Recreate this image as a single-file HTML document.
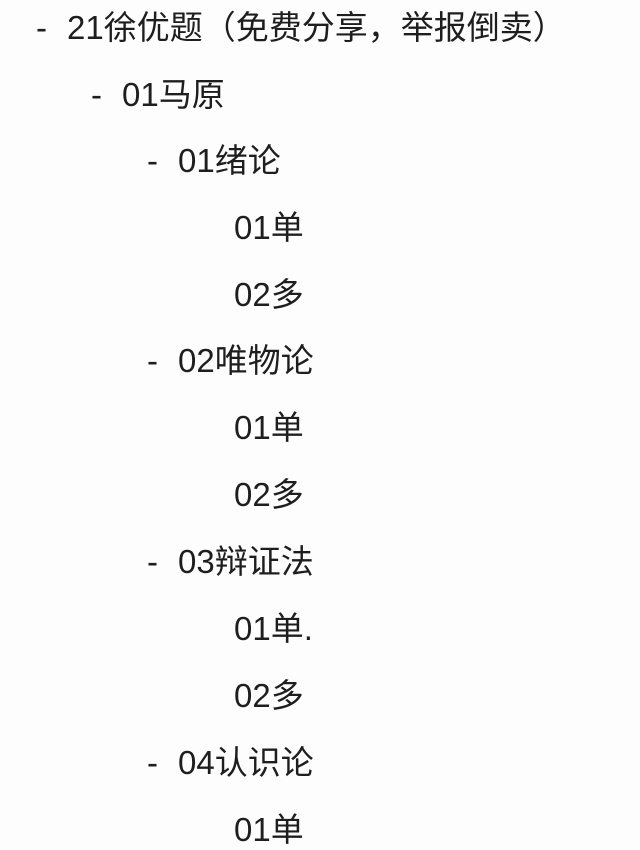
<!DOCTYPE html>
<html><head><meta charset="utf-8"><style>
body{margin:0;width:640px;height:845px;background:#fdfdfd;overflow:hidden;position:relative;font-family:"Liberation Sans","Noto Sans CJK SC",sans-serif;color:#1e1e1e;font-size:33px}
.l{position:absolute;line-height:40px;white-space:nowrap}
.d{position:absolute;line-height:40px}
</style></head><body>
<div class="d" style="left:36px;top:8px">-</div><div class="l" style="left:67px;top:8px">21徐优题（免费分享，举报倒卖）</div>
<div class="d" style="left:91px;top:75px">-</div><div class="l" style="left:122px;top:75px">01马原</div>
<div class="d" style="left:147px;top:141px">-</div><div class="l" style="left:178px;top:141px">01绪论</div>
<div class="l" style="left:234px;top:208px">01单</div>
<div class="l" style="left:234px;top:275px">02多</div>
<div class="d" style="left:147px;top:341px">-</div><div class="l" style="left:178px;top:341px">02唯物论</div>
<div class="l" style="left:234px;top:408px">01单</div>
<div class="l" style="left:234px;top:475px">02多</div>
<div class="d" style="left:147px;top:542px">-</div><div class="l" style="left:178px;top:542px">03辩证法</div>
<div class="l" style="left:234px;top:609px">01单.</div>
<div class="l" style="left:234px;top:676px">02多</div>
<div class="d" style="left:147px;top:743px">-</div><div class="l" style="left:178px;top:743px">04认识论</div>
<div class="l" style="left:234px;top:810px">01单</div>
</body></html>
